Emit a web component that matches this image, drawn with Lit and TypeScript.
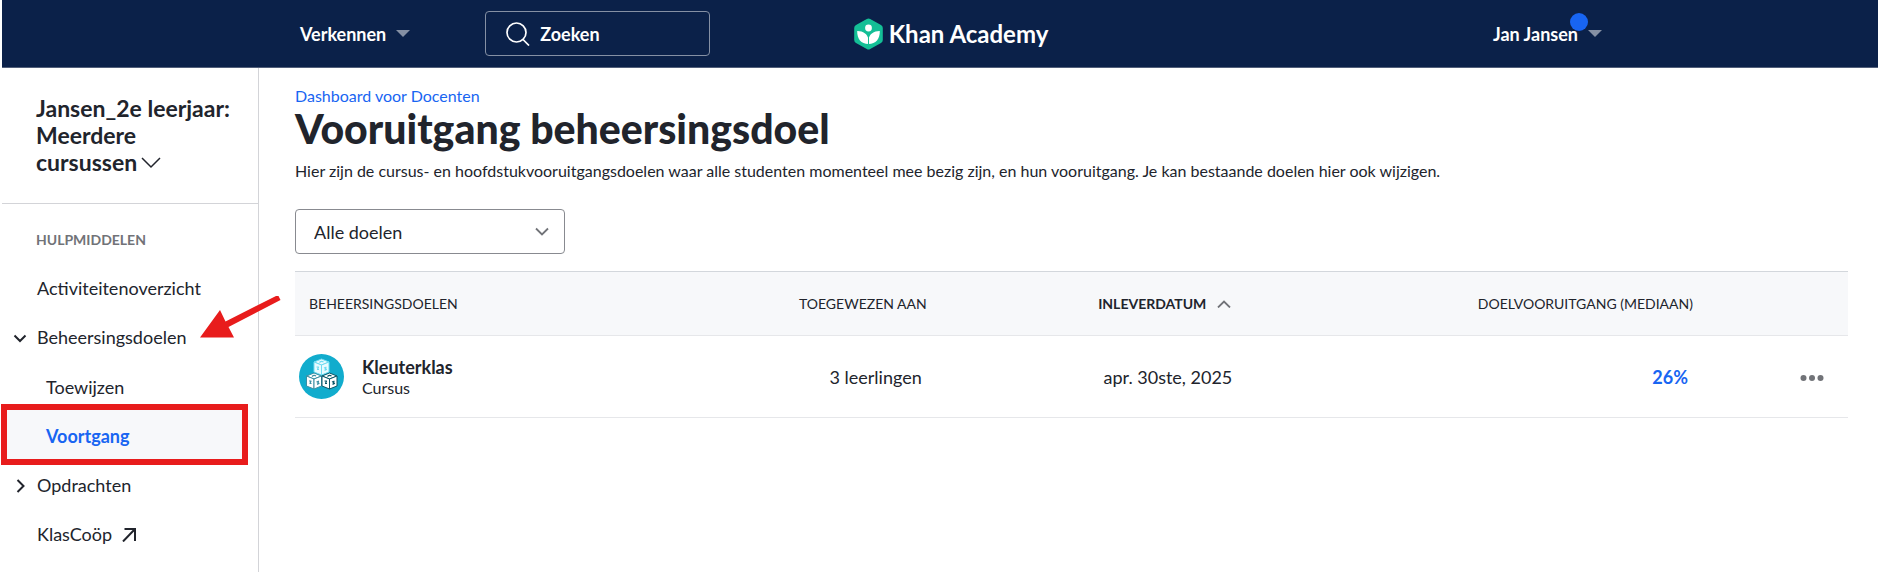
import { LitElement, html, css, svg } from "lit";
import { customElement } from "lit/decorators.js";

const base = css`
  :host {
    display: block;
    font-family: Lato, "Noto Sans", sans-serif;
    color: #21242c;
  }
  * {
    box-sizing: border-box;
  }
  svg {
    display: block;
    flex: none;
  }
  a {
    color: inherit;
    text-decoration: none;
  }
  button {
    margin: 0;
    padding: 0;
    border: 0;
    background: none;
    color: inherit;
    font: inherit;
    text-align: left;
    cursor: pointer;
  }
`;

@customElement("site-header")
class SiteHeader extends LitElement {
  static styles = [
    base,
    css`
      .bar {
        display: grid;
        grid-template-columns: 1fr auto 1fr;
        align-items: center;
        height: 68px;
        padding: 0 276px 0 298px;
        background: #0b2149;
        border-bottom: 1px solid #525f7a;
        color: #fff;
        font-size: 18px;
        line-height: 22px;
        font-weight: 700;
      }
      .left {
        display: flex;
        align-items: center;
        gap: 75px;
      }
      .menu {
        display: flex;
        align-items: center;
        gap: 10px;
        white-space: nowrap;
      }
      .search {
        display: flex;
        align-items: center;
        gap: 10px;
        width: 225px;
        height: 45px;
        padding: 0 20px;
        border: 1px solid #8590a4;
        border-radius: 4px;
      }
      .search input {
        min-width: 0;
        flex: 1;
        padding: 0;
        border: 0;
        outline: 0;
        background: none;
        color: #fff;
        font: inherit;
      }
      .search input::placeholder {
        color: #fff;
        opacity: 1;
      }
      .logo {
        display: flex;
        align-items: center;
        gap: 6px;
        font-size: 24px;
        line-height: 30px;
        white-space: nowrap;
      }
      .user {
        position: relative;
        justify-self: end;
      }
      .dot {
        position: absolute;
        right: 14px;
        top: -10px;
        width: 18px;
        height: 18px;
        border-radius: 50%;
        background: #1865f2;
      }
    `,
  ];

  private caret() {
    return html`<svg width="14" height="7" viewBox="0 0 14 7" aria-hidden="true">
      <path d="M0 0h14L7 7z" fill="#8590a4" />
    </svg>`;
  }

  render() {
    return html`<header class="bar">
      <div class="left">
        <button class="menu">Verkennen ${this.caret()}</button>
        <label class="search">
          <svg width="24" height="24" viewBox="0 0 24 24" fill="none" stroke="#fff" stroke-width="1.700" aria-hidden="true">
            <ellipse cx="10.500" cy="10.500" rx="9.500" ry="9.500" />
            <path d="M17 17.500 23 23.500" />
          </svg>
          <input type="search" placeholder="Zoeken" aria-label="Zoeken" />
        </label>
      </div>
      <a class="logo" href="#">
        <svg width="29" height="32" viewBox="0 0 29 32" aria-hidden="true">
          <path
            d="M12.800.900 2 6.900Q.200 8 .200 10v12q0 2 1.800 3.100l10.800 6q1.700 1 3.400 0l10.800-6q1.800-1.100 1.800-3.100V10q0-2-1.800-3.100L16.200.900q-1.700-1-3.400 0z"
            fill="#14bf96"
          />
          <circle cx="14.500" cy="10" r="3.400" fill="#fff" />
          <path
            d="M3.200 13.100C3 21 7 26 14.500 26C22 26 26 21 25.800 13.100C20 13 15.500 16 14.500 21.500C13.500 16 9 13 3.200 13.100z"
            fill="#fff"
          />
          <path d="M14.500 19V26" stroke="#14bf96" stroke-width="1" />
        </svg>
        Khan Academy
      </a>
      <button class="menu user">Jan Jansen ${this.caret()}<span class="dot"></span></button>
    </header>`;
  }
}

@customElement("class-sidebar")
class ClassSidebar extends LitElement {
  static styles = [
    base,
    css`
      :host {
        border-right: 1px solid #d3d4d8;
      }
      .class {
        padding: 27px 24px 27px 34px;
        border-bottom: 1px solid #d3d4d8;
      }
      .class button {
        font-size: 23px;
        line-height: 27px;
        font-weight: 700;
      }
      .class svg {
        display: inline-block;
      }
      .label {
        margin: 0;
        padding: 27px 34px 15px;
        color: #717378;
        font-size: 14px;
        line-height: 18px;
        font-weight: 700;
      }
      ul {
        margin: 0;
        padding: 0;
        list-style: none;
      }
      ul ul {
        padding-top: 1px;
      }
      li {
        position: relative;
        font-size: 18px;
        line-height: 49px;
      }
      .link {
        display: grid;
        grid-template-columns: 14px auto auto 1fr;
        column-gap: 10px;
        align-items: center;
        width: 100%;
        padding-left: 11px;
      }
      .link span {
        grid-column: 2;
      }
      .sub {
        display: block;
        position: relative;
        padding-left: 44px;
      }
      .current {
        color: #1865f2;
        font-weight: 700;
      }
      .pointer {
        position: absolute;
        left: 196px;
        top: -17px;
        z-index: 1;
      }
      .frame {
        position: absolute;
        inset: -8px 10px -4px -1px;
        border: 6px solid #e81c1c;
        background: #f7f8fa;
      }
    `,
  ];

  render() {
    const icon = (d: string) => html`<svg
      width="14"
      height="14"
      viewBox="0 0 14 14"
      fill="none"
      stroke="#21242c"
      stroke-width="2"
      aria-hidden="true"
    >
      <path d=${d} />
    </svg>`;
    return html`
      <div class="class">
        <button>
          Jansen_2e leerjaar: Meerdere cursussen<svg width="24" height="15" viewBox="0 0 24 15" fill="none" stroke="#21242c" stroke-width="1.500" aria-hidden="true">
            <path d="m5 2 9 9 9-9" />
          </svg>
        </button>
      </div>
      <nav aria-labelledby="tools">
        <h2 class="label" id="tools">HULPMIDDELEN</h2>
        <ul>
          <li><a class="link" href="#"><span>Activiteitenoverzicht</span></a></li>
          <li>
            <button class="link" aria-expanded="true">
              ${icon("m1.500 4.500 5.500 5.500 5.500-5.500")}<span>Beheersingsdoelen</span>
            </button>
            <svg class="pointer" width="86" height="46" viewBox="0 0 86 46" fill="#e81c1c" aria-hidden="true">
              <path d="M2 41.500 22 14 27.500 25.500 80 -1 82.500 4 30.500 31 36 41.500z" />
            </svg>
            <ul>
              <li><a class="sub" href="#">Toewijzen</a></li>
              <li>
                <div class="frame"></div>
                <a class="sub current" href="#" aria-current="page">Voortgang</a>
              </li>
            </ul>
          </li>
          <li><button class="link" aria-expanded="false">${icon("m4.500 1 6 6-6 6")}<span>Opdrachten</span></button></li>
          <li><a class="link" href="#"><span>KlasCoöp</span>${icon("M1 13.500 13 1M2.500 1H13V13")}</a></li>
        </ul>
      </nav>
    `;
  }
}

interface Goal {
  name: string;
  kind: string;
  assigned: string;
  due: string;
  progress: string;
}

@customElement("goal-progress")
class GoalProgress extends LitElement {
  static styles = [
    base,
    css`
      :host {
        padding: 18px 30px 40px 36px;
      }
      .crumb {
        color: #1865f2;
        font-size: 16px;
        line-height: 20px;
      }
      h1 {
        margin: 0;
        font-size: 41px;
        line-height: 46px;
        font-weight: 900;
      }
      p {
        margin: 9px 0 28px;
        font-size: 16px;
        line-height: 20px;
      }
      .filter {
        display: grid;
        align-items: center;
        width: 270px;
        margin-bottom: 17px;
      }
      .filter select {
        grid-area: 1 / 1;
        height: 45px;
        padding: 0 18px;
        appearance: none;
        border: 1px solid #888a90;
        border-radius: 4px;
        background: #fff;
        color: inherit;
        font: 18px/22px Lato, "Noto Sans", sans-serif;
      }
      .filter svg {
        grid-area: 1 / 1;
        justify-self: end;
        margin-right: 16px;
        pointer-events: none;
      }
      table {
        width: 100%;
        table-layout: fixed;
        border-collapse: collapse;
        border-top: 1px solid #d3d7dc;
      }
      .c1 {
        width: 24%;
      }
      .c2 {
        width: 17%;
      }
      .c3 {
        width: 20%;
      }
      .c5 {
        width: 150px;
      }
      tr {
        border-bottom: 1px solid #e6e7ea;
      }
      th {
        height: 64px;
        padding: 0 5px 0 14px;
        background: #f7f8fa;
        font-size: 14px;
        line-height: 18px;
        font-weight: 400;
        text-align: right;
        white-space: nowrap;
      }
      td {
        height: 82px;
        padding: 0 10px 0 4px;
        font-size: 18px;
        line-height: 22px;
        text-align: right;
      }
      th:first-child,
      td:first-child {
        text-align: left;
      }
      .sort {
        display: inline-flex;
        align-items: center;
        gap: 11px;
        margin-right: 6px;
        font-weight: 700;
      }
      .goal {
        display: flex;
        align-items: center;
        gap: 18px;
      }
      .name {
        font-weight: 700;
      }
      .kind {
        font-size: 16px;
        line-height: 20px;
      }
      .progress {
        color: #1865f2;
        font-weight: 700;
      }
      .more {
        display: inline-block;
        margin-right: 14px;
        vertical-align: middle;
      }
    `,
  ];

  private goals: Goal[] = [
    { name: "Kleuterklas", kind: "Cursus", assigned: "3 leerlingen", due: "apr. 30ste, 2025", progress: "26%" },
  ];

  private cube(x: number, y: number, fill: string, edge: string) {
    return svg`<g transform="translate(${x} ${y})" stroke=${edge} stroke-width="1" stroke-linejoin="round">
      <path d="M7.500 0 15 3 7.500 6 0 3z" fill=${fill} />
      <path d="M0 3 7.500 6V16L0 13z" fill=${fill} />
      <path d="M15 3 7.500 6V16L15 13z" fill=${fill} />
      <path d="M5.500 3.500q2-1.800 4-.500M2.500 8h2l-1 2.500h1.500M10 9l2-.800-.500 2 1 .200-2 1" fill="none" stroke-width="1.200" />
    </g>`;
  }

  render() {
    return html`
      <a class="crumb" href="#">Dashboard voor Docenten</a>
      <h1>Vooruitgang beheersingsdoel</h1>
      <p>
        Hier zijn de cursus- en hoofdstukvooruitgangsdoelen waar alle studenten momenteel mee bezig zijn, en hun
        vooruitgang. Je kan bestaande doelen hier ook wijzigen.
      </p>
      <div class="filter">
        <select aria-label="Doelen filteren">
          <option>Alle doelen</option>
        </select>
        <svg width="14" height="10" viewBox="0 0 14 10" fill="none" stroke="#717378" stroke-width="1.800" aria-hidden="true">
          <path d="m1 1.500 6 6 6-6" />
        </svg>
      </div>
      <table>
        <colgroup>
          <col class="c1" />
          <col class="c2" />
          <col class="c3" />
          <col />
          <col class="c5" />
        </colgroup>
        <thead>
          <tr>
            <th scope="col">BEHEERSINGSDOELEN</th>
            <th scope="col">TOEGEWEZEN AAN</th>
            <th scope="col" aria-sort="ascending">
              <button class="sort">
                INLEVERDATUM
                <svg width="14" height="8" viewBox="0 0 14 8" fill="none" stroke="#717378" stroke-width="1.800" aria-hidden="true">
                  <path d="m1 7.500 6-6 6 6" />
                </svg>
              </button>
            </th>
            <th scope="col">DOELVOORUITGANG (MEDIAAN)</th>
            <th></th>
          </tr>
        </thead>
        <tbody>
          ${this.goals.map(
            (g) => html`<tr>
              <td>
                <div class="goal">
                  <svg width="45" height="45" viewBox="0 0 45 45" aria-hidden="true">
                    <circle cx="22.500" cy="22.500" r="22.500" fill="#11accd" />
                    ${this.cube(15, 5, "#e8fbff", "#6fdcf2")}
                    ${this.cube(7.5, 19, "#fff", "#3c8fa3")}
                    ${this.cube(23, 19, "#fff", "#0b5567")}
                  </svg>
                  <div>
                    <div class="name">${g.name}</div>
                    <div class="kind">${g.kind}</div>
                  </div>
                </div>
              </td>
              <td>${g.assigned}</td>
              <td>${g.due}</td>
              <td><a class="progress" href="#">${g.progress}</a></td>
              <td>
                <button class="more" aria-label="Meer opties">
                  <svg width="24" height="22" viewBox="0 0 24 22" fill="#717378" aria-hidden="true">
                    <circle cx="3.500" cy="11" r="3" />
                    <circle cx="12" cy="11" r="3" />
                    <circle cx="20.500" cy="11" r="3" />
                  </svg>
                </button>
              </td>
            </tr>`,
          )}
        </tbody>
      </table>
    `;
  }
}

@customElement("app-root")
class AppRoot extends LitElement {
  static styles = css`
    :host {
      display: flex;
      flex-direction: column;
      min-height: 100vh;
      padding-left: 2px;
      box-sizing: border-box;
      background: #fff;
    }
    .body {
      display: grid;
      grid-template-columns: 257px minmax(0, 1fr);
      flex: 1;
    }
  `;

  render() {
    return html`
      <site-header></site-header>
      <div class="body">
        <class-sidebar></class-sidebar>
        <goal-progress></goal-progress>
      </div>
    `;
  }
}
